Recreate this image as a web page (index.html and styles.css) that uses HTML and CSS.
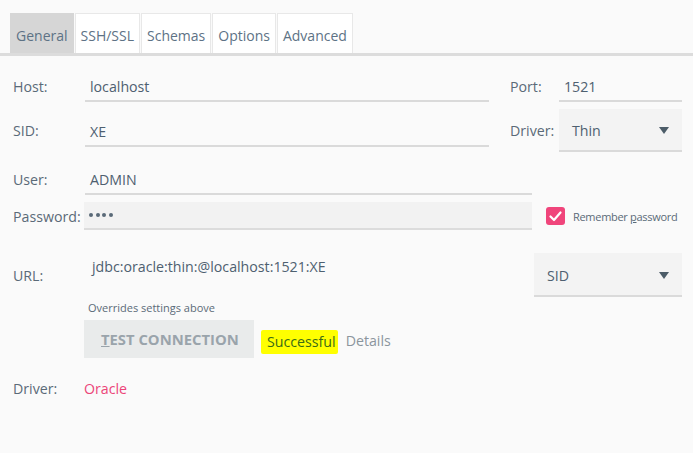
FILE: index.html
```html
<!DOCTYPE html>
<html>
<head>
<meta charset="utf-8">
<link rel="stylesheet" href="styles.css">
</head>
<body>
<div class="tabs">
  <div class="tab active">General</div>
  <div class="tab">SSH/SSL</div>
  <div class="tab">Schemas</div>
  <div class="tab">Options</div>
  <div class="tab">Advanced</div>
</div>
<div class="form">
  <div class="row r1">
    <div class="label">Host:</div>
    <div class="input host">localhost</div>
    <div class="label side">Port:</div>
    <div class="input port">1521</div>
  </div>
  <div class="row r2">
    <div class="label">SID:</div>
    <div class="input host">XE</div>
    <div class="label side">Driver:</div>
    <div class="select driver"><span>Thin</span><span class="arrow"></span></div>
  </div>
  <div class="row r3">
    <div class="label">User:</div>
    <div class="input user">ADMIN</div>
  </div>
  <div class="row r4">
    <div class="label pwlabel">Password:</div>
    <div class="input pw"><span class="dot"></span><span class="dot"></span><span class="dot"></span><span class="dot"></span></div>
    <div class="check"><svg width="13" height="11" viewBox="0 0 13 11"><path d="M1.5 5.5 L5 9 L11.5 1.5" fill="none" stroke="#fff" stroke-width="2.2" stroke-linecap="round" stroke-linejoin="round"/></svg></div>
    <div class="remember">Remember <u>p</u>assword</div>
  </div>
  <div class="row r5">
    <div class="label">URL:</div>
    <div class="url">jdbc:oracle:thin:@localhost:1521:XE</div>
    <div class="select urltype"><span>SID</span><span class="arrow"></span></div>
  </div>
  <div class="note">Overrides settings above</div>
  <div class="actions">
    <div class="button"><u>T</u>EST CONNECTION</div>
    <div class="success">Successful</div>
    <div class="details">Details</div>
  </div>
  <div class="row r6">
    <div class="label">Driver:</div>
    <div class="driver-name">Oracle</div>
  </div>
</div>
</body>
</html>
```
FILE: styles.css
```css
* { box-sizing: border-box; }
html, body { margin: 0; padding: 0; }
body {
  background: #fafafa;
  width: 693px;
  height: 453px;
  overflow: hidden;
  font-family: "Open Sans", "DejaVu Sans", sans-serif;
  font-size: 14.2px;
  color: #5a6a78;
}
.tabs {
  display: flex;
  padding: 13px 0 0 10px;
  border-bottom: 3px solid #dcdcdc;
  gap: 1px;
}
.tab {
  height: 40px;
  line-height: 38px;
  padding: 3px 5px 0;
  font-size: 14px;
  background: #fff;
  border: 1px solid #e8e8e8;
  border-bottom: none;
  color: #5d7285;
}
.tab.active {
  background: #d6d6d6;
  border-color: #d6d6d6;
}
.form {
  padding: 0 11px 0 13px;
}
.row {
  display: flex;
  align-items: center;
}
.label {
  width: 72px;
  flex: none;
}
.label.side {
  width: 49px;
  margin-left: 21px;
}
.input {
  height: 32px;
  line-height: 30px;
  padding-top: 2px;
  border-bottom: 2px solid #dadada;
  padding-left: 5px;
  color: #4e6070;
  flex: none;
}
.host { width: 404px; }
.port { width: 123px; }
.user { width: 447px; }
.r1 { margin-top: 14px; }
.r2 { margin-top: 7px; height: 43px; }
.r3 { margin-top: 11px; }
.r4 { margin-top: 7px; }
.pwlabel { width: 71px; }
.pw {
  width: 448px;
  height: 28px;
  padding: 0 0 0 5px;
  background: #f2f2f2;
  border-bottom: 2px solid #dcdcdc;
  display: flex;
  align-items: center;
  gap: 2.5px;
}
.dot {
  width: 4px;
  height: 4px;
  border-radius: 50%;
  background: #5a6a78;
}
.select {
  display: flex;
  align-items: center;
  justify-content: space-between;
  background: #f3f3f3;
  border-bottom: 2px solid #dadada;
  padding: 2px 13px 0;
  color: #4e6070;
  flex: none;
}
.driver { width: 123px; height: 43px; }
.urltype { width: 148px; height: 44px; }
.arrow {
  width: 0; height: 0;
  border-left: 5px solid transparent;
  border-right: 5px solid transparent;
  border-top: 7px solid #4c5c68;
}
.check {
  width: 19px;
  height: 18px;
  border-radius: 3px;
  background: #f0457b;
  margin-left: 14px;
  display: flex;
  align-items: center;
  justify-content: center;
}
.remember {
  margin-left: 8px;
  font-size: 11px;
  letter-spacing: -0.3px;
  white-space: nowrap;
  color: #5a6a78;
}
.r5 { margin-top: 23px; height: 44px; }
.url {
  flex: 1;
  align-self: stretch;
  padding: 4px 0 0 7px;
  line-height: 20px;
  color: #4e6070;
}
.note {
  margin: 4px 0 0 75px;
  font-size: 11px;
  line-height: 14px;
}
.actions {
  display: flex;
  align-items: center;
  margin: 5px 0 0 71px;
}
.button {
  width: 170px;
  height: 38px;
  background: #e9ebeb;
  color: #9aa4ab;
  font-weight: bold;
  font-size: 14.8px;
  line-height: 38px;
  padding-left: 17px;
}
.success {
  margin: 5px 0 0 7px;
  background: #ffff00;
  color: #3b6b17;
  padding: 2px 2px 3px 6px;
  border-radius: 2px;
}
.details {
  margin: 2px 0 0 8px;
  color: #8b959d;
}
.r6 { margin-top: 21px; }
.driver-name { color: #ec4579; margin-left: -1px; }
```
